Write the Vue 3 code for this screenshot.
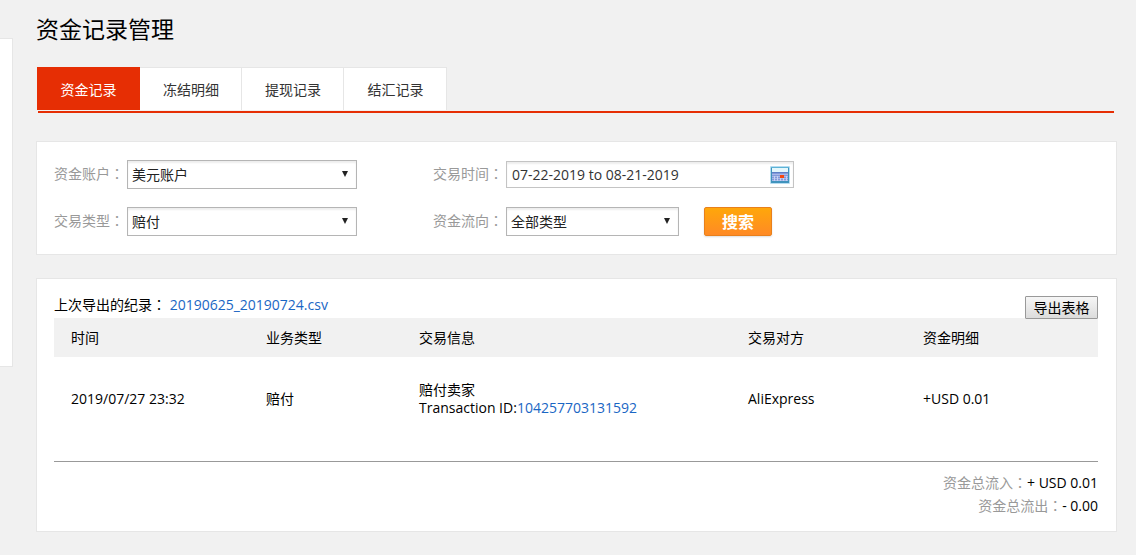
<script setup>
import { ref } from 'vue'

const tabs = ['资金记录', '冻结明细', '提现记录', '结汇记录']
const activeTab = ref(0)
const account = ref('美元账户')
const tradeType = ref('赔付')
const direction = ref('全部类型')
const dateRange = ref('07-22-2019 to 08-21-2019')
const headings = ['时间', '业务类型', '交易信息', '交易对方', '资金明细']
const records = [
  {
    time: '2019/07/27 23:32',
    type: '赔付',
    title: '赔付卖家',
    id: '104257703131592',
    party: 'AliExpress',
    amount: '+USD 0.01',
  },
]
</script>

<template>
  <div class="page">
    <aside class="side"></aside>
    <main class="main">
      <h1 class="title">资金记录管理</h1>

      <nav class="tabs">
        <button
          v-for="(tab, i) in tabs"
          :key="tab"
          type="button"
          class="tab"
          :class="{ active: i === activeTab }"
          @click="activeTab = i"
        >{{ tab }}</button>
      </nav>

      <form class="card filters" @submit.prevent>
        <div class="field">
          <label for="account">资金账户<span class="colon">：</span></label>
          <span class="select wide">
            <select id="account" v-model="account"><option>美元账户</option></select>
          </span>
        </div>
        <div class="field">
          <label for="range">交易时间<span class="colon">：</span></label>
          <span class="date">
            <input id="range" v-model="dateRange" type="text">
            <svg class="calendar" width="20" height="18" viewBox="0 0 20 18" aria-hidden="true">
              <rect x="0" y="0" width="20" height="18" rx="1" fill="#b5dcf0" />
              <rect x="1" y="1" width="18" height="16" fill="#3f93bd" />
              <rect x="1" y="1" width="18" height="1" fill="#5cb3d6" />
              <rect x="2" y="2" width="16" height="4" fill="#e4f7fc" />
              <rect x="2" y="6" width="16" height="1" fill="#5d80c6" />
              <rect x="2" y="7" width="16" height="8" fill="#8399da" />
              <path d="M2 8.5h16M2 10.5h16M2 12.5h16M2 14.5h16" stroke="#a9b9e8" />
              <path d="M4.5 10v5M7.5 10v5M10.5 10v5M13.5 10v5M16.5 10v5" stroke="#c6d1f2" />
              <rect x="10" y="9" width="4" height="3" fill="#f4470f" />
            </svg>
          </span>
        </div>
        <div class="field">
          <label for="type">交易类型<span class="colon">：</span></label>
          <span class="select wide">
            <select id="type" v-model="tradeType"><option>赔付</option></select>
          </span>
        </div>
        <div class="field">
          <label for="direction">资金流向<span class="colon">：</span></label>
          <span class="select narrow">
            <select id="direction" v-model="direction"><option>全部类型</option></select>
          </span>
          <button type="submit" class="search">搜索</button>
        </div>
      </form>

      <section class="card results">
        <div class="toolbar">
          <p>上次导出的纪录<span class="colon">：</span> <a href="#">20190625_20190724.csv</a></p>
          <button type="button" class="export">导出表格</button>
        </div>
        <table>
          <colgroup>
            <col class="c-time"><col class="c-type"><col class="c-info"><col class="c-party"><col>
          </colgroup>
          <thead>
            <tr><th v-for="h in headings" :key="h" scope="col">{{ h }}</th></tr>
          </thead>
          <tbody>
            <tr v-for="r in records" :key="r.id">
              <td>{{ r.time }}</td>
              <td>{{ r.type }}</td>
              <td>{{ r.title }}<br>Transaction ID:<a href="#">{{ r.id }}</a></td>
              <td>{{ r.party }}</td>
              <td>{{ r.amount }}</td>
            </tr>
          </tbody>
        </table>
        <div class="totals">
          <p><span>资金总流入<span class="colon">：</span></span>+ USD 0.01</p>
          <p><span>资金总流出<span class="colon">：</span></span>- 0.00</p>
        </div>
      </section>
    </main>
  </div>
</template>

<style>
body {
  background: #f1f1f1;
}
</style>

<style scoped>
.page,
.page button,
.page input,
.page select {
  font-family: "Open Sans", "Noto Sans CJK SC", sans-serif;
  font-size: 14px;
  line-height: 18px;
}
.page {
  display: flex;
  align-items: flex-start;
  gap: 23px;
  padding-right: 19px;
  color: #000;
}
.page * {
  box-sizing: border-box;
}
.colon {
  font-family: "Noto Sans CJK TC", sans-serif;
}
a {
  color: #1a66c4;
  text-decoration: none;
}
p {
  margin: 0;
}
.side {
  flex: none;
  width: 13px;
  min-height: 329px;
  margin-top: 38px;
  background: #fff;
  border: 1px solid #e6e6e6;
  border-left: 0;
}
.main {
  flex: 1;
  min-width: 0;
}
.title {
  margin: 0;
  padding: 13px 0 22px;
  font-size: 23px;
  line-height: 32px;
  font-weight: 400;
}
.tabs {
  display: flex;
  margin: 0 3px 28px 1px;
  position: relative;
}
.tabs::after {
  content: "";
  position: absolute;
  left: 1px;
  right: 0;
  bottom: 0;
  height: 2px;
  background: #e62e04;
}
.page .tab {
  width: 102px;
  height: 43px;
  margin-bottom: 3px;
  padding: 1px 0 0 1px;
  border: solid #e6e6e6;
  border-width: 1px 1px 0 0;
  background: #fff;
  color: #333;
}
.page .tab:last-child {
  width: 103px;
}
.page .tab.active {
  width: 103px;
  border-color: #e62e04;
  background: #e62e04;
  color: #fff;
}
.card {
  background: #fff;
  border: 1px solid #e6e6e6;
}
.filters {
  display: grid;
  grid-template-columns: 379px 1fr;
  grid-auto-rows: 29px;
  row-gap: 18px;
  padding: 18px 17px;
  margin-bottom: 23px;
}
.field {
  display: flex;
  align-items: center;
}
.field label {
  flex: none;
  margin-right: 3px;
  padding-bottom: 2px;
  color: #999;
}
.select,
.date {
  position: relative;
  display: block;
}
.wide {
  width: 230px;
}
.narrow {
  width: 173px;
}
.date {
  width: 288px;
}
.select::after {
  content: "";
  position: absolute;
  right: 9px;
  top: 11px;
  border: solid transparent;
  border-width: 6px 3px 0;
  border-top-color: #222;
  pointer-events: none;
}
.page select {
  display: block;
  width: 100%;
  height: 29px;
  padding: 0 20px 0 4px;
  appearance: none;
  border: 1px solid #b5b5b5;
  border-radius: 0;
  background: #fff;
  box-shadow: inset 0 2px 2px #eee;
  color: #222;
}
.page input {
  display: block;
  width: 100%;
  height: 27px;
  padding: 0 28px 0 5px;
  border: 1px solid #c4c4c4;
  background: #fff;
  box-shadow: inset 0 2px 2px #eee;
  color: #333;
}
.calendar {
  position: absolute;
  right: 4px;
  top: 5px;
}
.page .search {
  width: 68px;
  height: 29px;
  margin-left: 25px;
  padding: 0;
  border: 1px solid #e8801c;
  border-radius: 2px;
  background: linear-gradient(#ffa70a, #ff8a25);
  box-shadow: 0 1px 2px #ddd;
  color: #fff;
  font-size: 16px;
  font-weight: 700;
}
.results {
  padding: 17px 18px 14px 17px;
}
.toolbar {
  display: flex;
  justify-content: space-between;
  align-items: flex-start;
  height: 22px;
}
.toolbar p {
  line-height: 16px;
}
.page .export {
  position: relative;
  width: 73px;
  height: 23px;
  padding: 0;
  border: 1px solid #999;
  border-radius: 1px;
  background: linear-gradient(#f6f6f6, #dcdcdc);
  color: #000;
}
table {
  width: 100%;
  table-layout: fixed;
  border-collapse: collapse;
  border-bottom: 1px solid #999;
}
.c-time {
  width: 195px;
}
.c-type {
  width: 153px;
}
.c-info {
  width: 329px;
}
.c-party {
  width: 175px;
}
th,
td {
  padding: 0 0 0 17px;
  text-align: left;
  font-weight: 400;
}
th {
  height: 39px;
  background: #f1f1f1;
}
td {
  padding-top: 24px;
  padding-bottom: 44px;
}
.totals {
  padding-top: 9px;
  text-align: right;
  line-height: 23px;
}
.totals span {
  color: #999;
}
</style>
